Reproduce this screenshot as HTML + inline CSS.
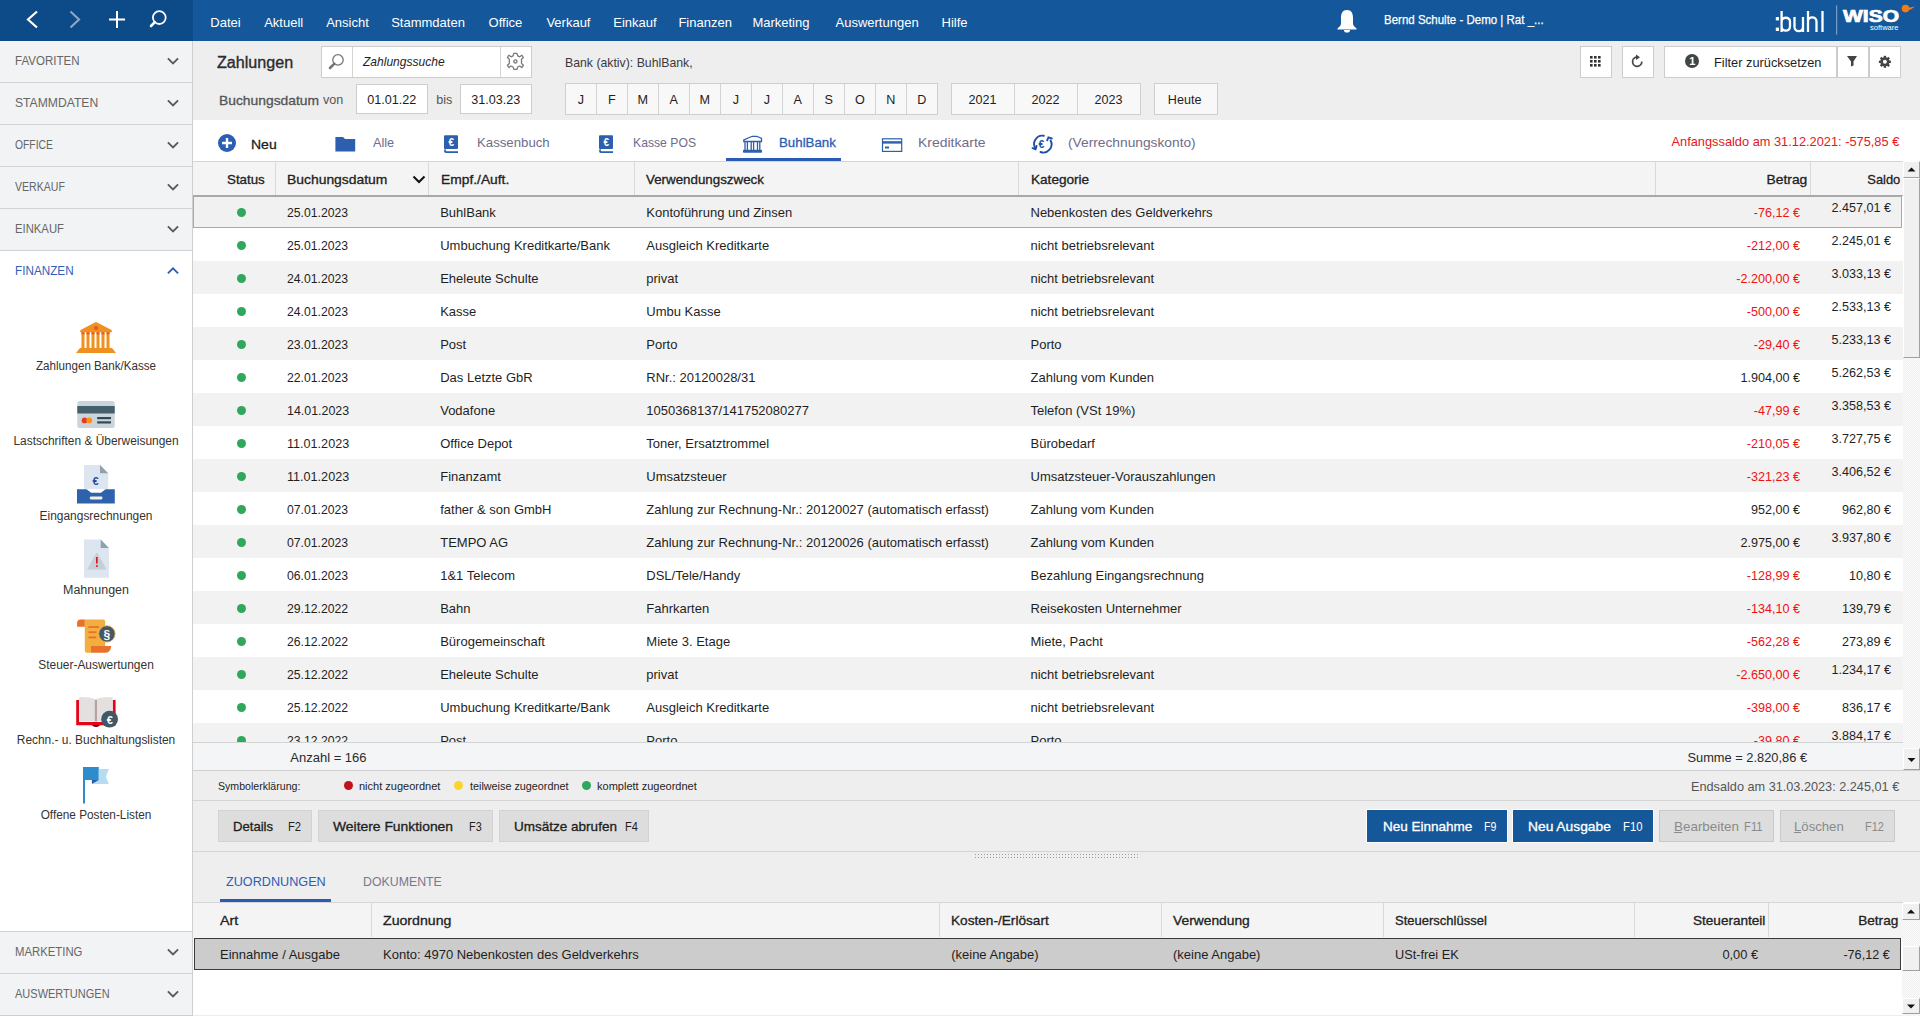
<!DOCTYPE html>
<html><head><meta charset="utf-8"><title>Zahlungen</title>
<style>
html,body{margin:0;padding:0;width:1920px;height:1016px;overflow:hidden;background:#fff;}
body{position:relative;font-family:"Liberation Sans",sans-serif;}
.r{position:absolute;}
.t{position:absolute;white-space:nowrap;line-height:1;}
</style></head><body>
<div class="r" style="left:0px;top:0px;width:193px;height:41px;background:#0d4a88;"></div>
<div class="r" style="left:193px;top:0px;width:1727px;height:41px;background:#14579b;"></div>
<div class="r" style="left:0px;top:41px;width:192px;height:975px;background:#f2f3f5;"></div>
<div class="r" style="left:192px;top:41px;width:1px;height:975px;background:#cfcfcf;"></div>
<div class="r" style="left:0px;top:251px;width:192px;height:681px;background:#ffffff;"></div>
<div class="r" style="left:0px;top:82px;width:192px;height:1px;background:#d2d2d2;"></div>
<div class="r" style="left:0px;top:124px;width:192px;height:1px;background:#d2d2d2;"></div>
<div class="r" style="left:0px;top:166px;width:192px;height:1px;background:#d2d2d2;"></div>
<div class="r" style="left:0px;top:208px;width:192px;height:1px;background:#d2d2d2;"></div>
<div class="r" style="left:0px;top:250px;width:192px;height:1px;background:#d2d2d2;"></div>
<div class="r" style="left:0px;top:931px;width:192px;height:1px;background:#d2d2d2;"></div>
<div class="r" style="left:0px;top:973px;width:192px;height:1px;background:#d2d2d2;"></div>
<div class="r" style="left:193px;top:41px;width:1727px;height:79px;background:#eeeeee;"></div>
<div class="r" style="left:193px;top:120px;width:1727px;height:41px;background:#ffffff;"></div>
<div class="r" style="left:193px;top:161px;width:1710px;height:1px;background:#d4d4d4;"></div>
<svg class="r" style="left:0;top:0" width="193" height="41" viewBox="0 0 193 41">
<polyline points="37,11.5 28,19.5 37,27.5" fill="none" stroke="#fff" stroke-width="2.2"/>
<polyline points="70.5,11.5 79,19.5 70.5,27.5" fill="none" stroke="#8ca6c6" stroke-width="2.2"/>
<path d="M117,11 V28 M109,19.5 H125" stroke="#fff" stroke-width="2"/>
<circle cx="159.3" cy="17.6" r="6.4" fill="none" stroke="#fff" stroke-width="1.8"/>
<path d="M154.8,22.2 L151,26" stroke="#fff" stroke-width="2.6" stroke-linecap="round"/>
</svg>
<div class="t" style="top:16.00px;font-size:13px;color:#ffffff;left:210.3px;">Datei</div>
<div class="t" style="top:16.00px;font-size:13px;color:#ffffff;left:264.2px;">Aktuell</div>
<div class="t" style="top:16.00px;font-size:13px;color:#ffffff;left:326.2px;">Ansicht</div>
<div class="t" style="top:16.00px;font-size:13px;color:#ffffff;left:391.2px;">Stammdaten</div>
<div class="t" style="top:16.00px;font-size:13px;color:#ffffff;left:488.6px;">Office</div>
<div class="t" style="top:16.00px;font-size:13px;color:#ffffff;left:546.4px;">Verkauf</div>
<div class="t" style="top:16.00px;font-size:13px;color:#ffffff;left:613.3px;">Einkauf</div>
<div class="t" style="top:16.00px;font-size:13px;color:#ffffff;left:678.4px;">Finanzen</div>
<div class="t" style="top:16.00px;font-size:13px;color:#ffffff;left:752.4px;">Marketing</div>
<div class="t" style="top:16.00px;font-size:13px;color:#ffffff;left:835.5px;">Auswertungen</div>
<div class="t" style="top:16.00px;font-size:13px;color:#ffffff;left:941.5px;">Hilfe</div>
<svg class="r" style="left:1335px;top:8px" width="24" height="26" viewBox="0 0 24 26">
<path d="M12,2 C7.5,2 6,5.5 6,10 L6,15.5 C6,17.5 4.2,19 2.5,20.5 L2.5,21.5 L21.5,21.5 L21.5,20.5 C19.8,19 18,17.5 18,15.5 L18,10 C18,5.5 16.5,2 12,2 Z" fill="#fff"/>
<path d="M9,22 A3,2.6 0 0 0 15,22 Z" fill="#fff"/>
</svg>
<div class="t" style="top:14.42px;font-size:12.5px;-webkit-text-stroke:0.25px #ffffff;transform:scaleX(0.9203);transform-origin:left 50%;color:#ffffff;left:1383.7px;">Bernd Schulte - Demo | Rat _...</div>
<svg class="r" style="left:1770px;top:0" width="150" height="41" viewBox="0 0 150 41">
<rect x="5.8" y="17" width="3.2" height="3.4" fill="#fff"/><rect x="5.8" y="27.6" width="3.2" height="3.4" fill="#fff"/>
<path d="M11.6,11 V32 M11.6,21.5 C11.6,16.5 20,16.5 20,21.5 V26.5 C20,32 11.6,32 11.6,26.5" fill="none" stroke="#fff" stroke-width="2.3"/>
<path d="M24.5,17 V27 C24.5,32.5 33,32.5 33,27 V17 M33,17 V32" fill="none" stroke="#fff" stroke-width="2.3"/>
<path d="M38,11 V32 M38,21.5 C38,16 46.5,16 46.5,21.5 V32" fill="none" stroke="#fff" stroke-width="2.3"/>
<path d="M52.5,11 V32" fill="none" stroke="#fff" stroke-width="2.3"/>
<rect x="66.2" y="5.4" width="1" height="29.2" fill="#8eabd0"/>
<text x="73" y="22.2" font-family="Liberation Sans" font-weight="700" font-size="15.6" fill="#fff" stroke="#fff" stroke-width="0.7" textLength="56" lengthAdjust="spacingAndGlyphs">WISO</text>
<text x="100" y="30" font-family="Liberation Sans" font-size="8" fill="#fff" textLength="28.5" lengthAdjust="spacingAndGlyphs">software</text>
<circle cx="135.5" cy="8.6" r="3.8" fill="#f07d1a"/><path d="M137,8 L145,6.5 L140,10" fill="#f07d1a"/>
</svg>
<div class="t" style="top:54.89px;font-size:12.3px;transform:scaleX(0.9388);transform-origin:left 50%;color:#666666;left:15.4px;">FAVORITEN</div>
<svg class="r" style="left:166px;top:56px" width="14" height="10" viewBox="0 0 14 10"><polyline points="1.9,2.4 7,7.4 12.1,2.4" fill="none" stroke="#5a5a5a" stroke-width="1.9"/></svg>
<div class="t" style="top:96.89px;font-size:12.3px;transform:scaleX(0.9880);transform-origin:left 50%;color:#666666;left:15.4px;">STAMMDATEN</div>
<svg class="r" style="left:166px;top:98px" width="14" height="10" viewBox="0 0 14 10"><polyline points="1.9,2.4 7,7.4 12.1,2.4" fill="none" stroke="#5a5a5a" stroke-width="1.9"/></svg>
<div class="t" style="top:138.89px;font-size:12.3px;transform:scaleX(0.8389);transform-origin:left 50%;color:#666666;left:15.4px;">OFFICE</div>
<svg class="r" style="left:166px;top:140px" width="14" height="10" viewBox="0 0 14 10"><polyline points="1.9,2.4 7,7.4 12.1,2.4" fill="none" stroke="#5a5a5a" stroke-width="1.9"/></svg>
<div class="t" style="top:180.89px;font-size:12.3px;transform:scaleX(0.8578);transform-origin:left 50%;color:#666666;left:15.4px;">VERKAUF</div>
<svg class="r" style="left:166px;top:182px" width="14" height="10" viewBox="0 0 14 10"><polyline points="1.9,2.4 7,7.4 12.1,2.4" fill="none" stroke="#5a5a5a" stroke-width="1.9"/></svg>
<div class="t" style="top:222.89px;font-size:12.3px;transform:scaleX(0.9183);transform-origin:left 50%;color:#666666;left:15.4px;">EINKAUF</div>
<svg class="r" style="left:166px;top:224px" width="14" height="10" viewBox="0 0 14 10"><polyline points="1.9,2.4 7,7.4 12.1,2.4" fill="none" stroke="#5a5a5a" stroke-width="1.9"/></svg>
<div class="t" style="top:264.89px;font-size:12.3px;transform:scaleX(0.9533);transform-origin:left 50%;color:#2f5fb9;left:15.4px;">FINANZEN</div>
<svg class="r" style="left:166px;top:265.5px" width="14" height="10" viewBox="0 0 14 10"><polyline points="1.9,7.4 7,2.4 12.1,7.4" fill="none" stroke="#2f5fb9" stroke-width="1.9"/></svg>
<div class="t" style="top:945.89px;font-size:12.3px;transform:scaleX(0.9222);transform-origin:left 50%;color:#666666;left:15.4px;">MARKETING</div>
<svg class="r" style="left:166px;top:947px" width="14" height="10" viewBox="0 0 14 10"><polyline points="1.9,2.4 7,7.4 12.1,2.4" fill="none" stroke="#5a5a5a" stroke-width="1.9"/></svg>
<div class="t" style="top:987.89px;font-size:12.3px;transform:scaleX(0.8952);transform-origin:left 50%;color:#666666;left:15.4px;">AUSWERTUNGEN</div>
<svg class="r" style="left:166px;top:989px" width="14" height="10" viewBox="0 0 14 10"><polyline points="1.9,2.4 7,7.4 12.1,2.4" fill="none" stroke="#5a5a5a" stroke-width="1.9"/></svg>
<div class="t" style="top:359.74px;font-size:12px;transform:scaleX(0.9677);transform-origin:center 50%;color:#333333;left:-203.7px;width:600px;text-align:center;">Zahlungen Bank/Kasse</div>
<div class="t" style="top:434.84px;font-size:12px;transform:scaleX(0.9945);transform-origin:center 50%;color:#333333;left:-203.7px;width:600px;text-align:center;">Lastschriften &amp; Überweisungen</div>
<div class="t" style="top:509.84px;font-size:12px;transform:scaleX(0.9955);transform-origin:center 50%;color:#333333;left:-203.7px;width:600px;text-align:center;">Eingangsrechnungen</div>
<div class="t" style="top:584.34px;font-size:12px;transform:scaleX(1.0403);transform-origin:center 50%;color:#333333;left:-203.7px;width:600px;text-align:center;">Mahnungen</div>
<div class="t" style="top:659.44px;font-size:12px;transform:scaleX(0.9957);transform-origin:center 50%;color:#333333;left:-203.7px;width:600px;text-align:center;">Steuer-Auswertungen</div>
<div class="t" style="top:734.34px;font-size:12px;transform:scaleX(0.9937);transform-origin:center 50%;color:#333333;left:-203.7px;width:600px;text-align:center;">Rechn.- u. Buchhaltungslisten</div>
<div class="t" style="top:809.34px;font-size:12px;transform:scaleX(0.9830);transform-origin:center 50%;color:#333333;left:-203.7px;width:600px;text-align:center;">Offene Posten-Listen</div>
<svg class="r" style="left:0;top:300px" width="192" height="520" viewBox="0 300 192 520">
<!-- bank -->
<path d="M96,322 L80.5,330 Q79.5,331.5 80.5,332.3 L111.5,332.3 Q112.5,331.5 111.5,330 Z" fill="#f0901f"/>
<circle cx="96" cy="328" r="2" fill="#e4582a"/>
<g fill="#f0901f"><rect x="81.5" y="332" width="3" height="16"/><rect x="86.5" y="332" width="3" height="16"/><rect x="91.5" y="332" width="3" height="16"/><rect x="96.5" y="332" width="3" height="16"/><rect x="101.5" y="332" width="3" height="16"/><rect x="106.5" y="332" width="3" height="16"/></g>
<g fill="#e4582a"><rect x="81.5" y="332.3" width="3" height="2"/><rect x="86.5" y="332.3" width="3" height="2"/><rect x="91.5" y="332.3" width="3" height="2"/><rect x="96.5" y="332.3" width="3" height="2"/><rect x="101.5" y="332.3" width="3" height="2"/><rect x="106.5" y="332.3" width="3" height="2"/></g>
<path d="M80,348 L112,348 L116,353 L76,353 Z" fill="#f0901f"/>
<!-- card -->
<rect x="77.3" y="401" width="37.4" height="27" rx="2.5" fill="#cbd4da"/>
<rect x="77.3" y="406" width="37.4" height="7.5" fill="#44606c"/>
<circle cx="84.6" cy="420.4" r="2.9" fill="#e63c1e"/><circle cx="89.3" cy="420.4" r="2.9" fill="#f7941d"/>
<rect x="97.2" y="417" width="13.8" height="2.2" fill="#2e4a56"/><rect x="97.2" y="421.3" width="13.8" height="2.2" fill="#2e4a56"/>
<!-- inbox -->
<path d="M84,465 L100,465 L108.2,473.3 L108.2,489 L84,489 Z" fill="#dde5f0"/>
<path d="M100,465 L108.2,473.3 L100,473.3 Z" fill="#8fa2ac"/>
<text x="95.5" y="485" font-family="Liberation Sans" font-size="11" font-weight="700" fill="#1f4f9e" text-anchor="middle">€</text>
<path d="M77,489.3 L86.5,489.3 L91.2,492.8 L101,492.8 L105.5,489.3 L114.8,489.3 L114.8,503.6 L77,503.6 Z" fill="#2f62ad"/>
<rect x="89.7" y="496.6" width="12.8" height="2.8" rx="1.4" fill="#f4f2de"/>
<!-- warning doc -->
<path d="M84,539.4 L100.7,539.4 L108.9,548 L108.9,577.8 L84,577.8 Z" fill="#dde5f0"/>
<path d="M100.7,539.4 L108.9,548 L100.7,548 Z" fill="#8fa2ac"/>
<path d="M96.8,553 L105.8,569 L87.8,569 Z" fill="#c3cfd9" stroke="#c3cfd9" stroke-width="1" stroke-linejoin="round"/>
<rect x="96" y="557" width="1.7" height="6.5" fill="#e3141e"/><rect x="96" y="565.2" width="1.7" height="1.7" fill="#e3141e"/>
<!-- scroll -->
<path d="M84.8,619.4 L103,619.4 Q105.2,619.4 105.2,621.6 L105.2,646 L91,646 L91,652.8 L87,652.8 Q84.8,652.8 84.8,650.6 Z" fill="#f2ae3e"/>
<path d="M80.5,619.4 L84.8,619.4 L84.8,626.8 L77.1,626.8 L77.1,623 Q77.1,619.4 80.5,619.4 Z" fill="#e8712b"/>
<path d="M91,645.9 L111.3,645.9 Q110.5,652.8 105,652.8 L91,652.8 Z" fill="#e8712b"/>
<rect x="88.4" y="626.2" width="10.6" height="1.8" fill="#e8712b"/><rect x="88.4" y="631.3" width="8" height="1.8" fill="#e8712b"/><rect x="88.4" y="636.5" width="8" height="1.8" fill="#e8712b"/>
<circle cx="106.9" cy="633.9" r="8.2" fill="#43596a" stroke="#f2ae3e" stroke-width="0.8"/>
<text x="106.9" y="638.6" font-family="Liberation Sans" font-size="12" font-weight="700" fill="#fff" text-anchor="middle">§</text>
<!-- book -->
<path d="M76.2,700 L79,700 L79,722 L112.7,722 L112.7,700 L115.6,700 L115.6,725.2 L100,725.2 Q96,729 92,725.2 L76.2,725.2 Z" fill="#e3051b"/>
<path d="M79.1,697.2 Q87,696.5 95.5,699 Q104,696.5 112.7,697.2 L112.7,721.5 L79.1,721.5 Z" fill="#e4e0e0"/>
<rect x="94.8" y="700" width="2.2" height="21.5" fill="#b9a29e"/>
<path d="M92,725 Q96,728 100,725" fill="#111"/>
<circle cx="109.6" cy="719.2" r="8.4" fill="#3f5966"/>
<text x="109.8" y="723.5" font-family="Liberation Sans" font-size="11" font-weight="700" fill="#fff" text-anchor="middle">€</text>
<!-- flag -->
<rect x="83" y="767" width="2" height="36.5" fill="#2e8bcc"/>
<path d="M83,767 L98.8,767 L98.8,780 L83,780 Z" fill="#2e8bcc"/>
<path d="M98.8,769 L108.9,769 L105.9,776.7 L108.9,783.9 L92,783.9 L98.8,780 Z" fill="#b5dcf3"/>
<path d="M91.9,780 L98.8,780 L91.9,784 Z" fill="#1f5fae"/>
</svg>
<div class="t" style="top:55.46px;font-size:16px;-webkit-text-stroke:0.35px #2b2b2b;transform:scaleX(1.0067);transform-origin:left 50%;color:#2b2b2b;left:217px;">Zahlungen</div>
<div class="r" style="left:321px;top:46px;width:211px;height:32px;background:#ffffff;box-sizing:border-box;border:1px solid #cdcdcd;"></div>
<div class="r" style="left:352px;top:47px;width:1px;height:30px;background:#d4d4d4;"></div>
<div class="r" style="left:500px;top:47px;width:1px;height:30px;background:#d4d4d4;"></div>
<svg class="r" style="left:321px;top:46px" width="211" height="32" viewBox="321 46 211 32">
<circle cx="338" cy="59.9" r="5.2" fill="none" stroke="#767676" stroke-width="1.3"/>
<path d="M334.2,63.8 L330,68" stroke="#767676" stroke-width="2.6" stroke-linecap="round"/>
<g transform="translate(515.4,61.4)" fill="none" stroke="#7a7a7a" stroke-width="1.3" stroke-linejoin="round">
<path d="M-1.6,-8 L1.6,-8 L2.3,-5.6 L4.4,-4.6 L6.4,-6.2 L8,-3.9 L6.1,-2.2 L6.1,2.2 L8,3.9 L6.4,6.2 L4.4,4.6 L2.3,5.6 L1.6,8 L-1.6,8 L-2.3,5.6 L-4.4,4.6 L-6.4,6.2 L-8,3.9 L-6.1,2.2 L-6.1,-2.2 L-8,-3.9 L-6.4,-6.2 L-4.4,-4.6 L-2.3,-5.6 Z"/>
<circle cx="0" cy="0" r="1.6"/>
</g>
</svg>
<div class="t" style="top:55.83px;font-size:12.6px;font-style:italic;transform:scaleX(0.9553);transform-origin:left 50%;color:#1e1e1e;left:362.8px;">Zahlungssuche</div>
<div class="t" style="top:56.83px;font-size:12.6px;transform:scaleX(0.9748);transform-origin:left 50%;color:#3a3a3a;left:565px;">Bank (aktiv): BuhlBank,</div>
<div class="r" style="left:1580px;top:46px;width:32px;height:32px;background:#ffffff;box-sizing:border-box;border:1px solid #cdcdcd;"></div>
<div class="r" style="left:1622px;top:46px;width:32px;height:32px;background:#ffffff;box-sizing:border-box;border:1px solid #cdcdcd;"></div>
<div class="r" style="left:1664px;top:46px;width:173px;height:32px;background:#ffffff;box-sizing:border-box;border:1px solid #cdcdcd;"></div>
<div class="r" style="left:1837px;top:46px;width:32px;height:32px;background:#ffffff;box-sizing:border-box;border:1px solid #cdcdcd;"></div>
<div class="r" style="left:1869px;top:46px;width:32px;height:32px;background:#ffffff;box-sizing:border-box;border:1px solid #cdcdcd;"></div>
<svg class="r" style="left:1580px;top:46px" width="330" height="32" viewBox="1580 46 330 32">
<g fill="#333">
<rect x="1590" y="56" width="2.6" height="2.6"/><rect x="1594" y="56" width="2.6" height="2.6"/><rect x="1598" y="56" width="2.6" height="2.6"/>
<rect x="1590" y="60" width="2.6" height="2.6"/><rect x="1594" y="60" width="2.6" height="2.6"/><rect x="1598" y="60" width="2.6" height="2.6"/>
<rect x="1590" y="64" width="2.6" height="2.6"/><rect x="1594" y="64" width="2.6" height="2.6"/><rect x="1598" y="64" width="2.6" height="2.6"/>
</g>
<path d="M1641.8,61.6 A4.6,4.6 0 1 1 1636.3,57.2" fill="none" stroke="#444" stroke-width="1.7"/>
<path d="M1636,54.5 L1640,57.3 L1636,60 Z" fill="#444"/>
<circle cx="1692" cy="61" r="7" fill="#444"/>
<text x="1692.3" y="65.4" font-family="Liberation Sans" font-size="11" font-weight="700" fill="#fff" text-anchor="middle">1</text>
<path d="M1847,56 L1857,56 L1853.5,61.5 L1853.5,65.5 L1851,66.6 L1851,61.5 Z" fill="#444"/>
<g transform="translate(1884.9,61.8)" fill="#444">
<circle r="4.6"/>
<rect x="-1.2" y="-6" width="2.4" height="12"/><rect x="-6" y="-1.2" width="12" height="2.4"/>
<rect x="-1.2" y="-6" width="2.4" height="12" transform="rotate(45)"/><rect x="-1.2" y="-6" width="2.4" height="12" transform="rotate(-45)"/>
</g>
<circle cx="1884.9" cy="61.8" r="2" fill="#fff"/>
</svg>
<div class="t" style="top:56.76px;font-size:12.8px;color:#1e1e1e;left:1714px;">Filter zurücksetzen</div>
<div class="t" style="top:93.50px;font-size:13px;-webkit-text-stroke:0.3px #555555;transform:scaleX(1.0656);transform-origin:left 50%;color:#555555;left:218.5px;">Buchungsdatum</div>
<div class="t" style="top:93.83px;font-size:12.6px;color:#555555;left:323px;">von</div>
<div class="r" style="left:356px;top:84px;width:72px;height:30px;background:#ffffff;box-sizing:border-box;border:1px solid #cdcdcd;"></div>
<div class="t" style="top:94.33px;font-size:12.6px;color:#1e1e1e;left:367.3px;">01.01.22</div>
<div class="t" style="top:93.83px;font-size:12.6px;color:#555555;left:436.2px;">bis</div>
<div class="r" style="left:460px;top:84px;width:72px;height:30px;background:#ffffff;box-sizing:border-box;border:1px solid #cdcdcd;"></div>
<div class="t" style="top:94.33px;font-size:12.6px;color:#1e1e1e;left:471.3px;">31.03.23</div>
<div class="r" style="left:565px;top:83px;width:373px;height:32px;background:#f8f8f8;box-sizing:border-box;border:1px solid #cfcfcf;"></div>
<div class="t" style="top:94.13px;font-size:12.6px;color:#1e1e1e;left:280.79999999999995px;width:600px;text-align:center;">J</div>
<div class="r" style="left:596px;top:84px;width:1px;height:30px;background:#d3d3d3;"></div>
<div class="t" style="top:94.13px;font-size:12.6px;color:#1e1e1e;left:311.79999999999995px;width:600px;text-align:center;">F</div>
<div class="r" style="left:627px;top:84px;width:1px;height:30px;background:#d3d3d3;"></div>
<div class="t" style="top:94.13px;font-size:12.6px;color:#1e1e1e;left:342.79999999999995px;width:600px;text-align:center;">M</div>
<div class="r" style="left:658px;top:84px;width:1px;height:30px;background:#d3d3d3;"></div>
<div class="t" style="top:94.13px;font-size:12.6px;color:#1e1e1e;left:373.79999999999995px;width:600px;text-align:center;">A</div>
<div class="r" style="left:689px;top:84px;width:1px;height:30px;background:#d3d3d3;"></div>
<div class="t" style="top:94.13px;font-size:12.6px;color:#1e1e1e;left:404.79999999999995px;width:600px;text-align:center;">M</div>
<div class="r" style="left:720px;top:84px;width:1px;height:30px;background:#d3d3d3;"></div>
<div class="t" style="top:94.13px;font-size:12.6px;color:#1e1e1e;left:435.79999999999995px;width:600px;text-align:center;">J</div>
<div class="r" style="left:751px;top:84px;width:1px;height:30px;background:#d3d3d3;"></div>
<div class="t" style="top:94.13px;font-size:12.6px;color:#1e1e1e;left:466.79999999999995px;width:600px;text-align:center;">J</div>
<div class="r" style="left:782px;top:84px;width:1px;height:30px;background:#d3d3d3;"></div>
<div class="t" style="top:94.13px;font-size:12.6px;color:#1e1e1e;left:497.79999999999995px;width:600px;text-align:center;">A</div>
<div class="r" style="left:813px;top:84px;width:1px;height:30px;background:#d3d3d3;"></div>
<div class="t" style="top:94.13px;font-size:12.6px;color:#1e1e1e;left:528.8px;width:600px;text-align:center;">S</div>
<div class="r" style="left:844px;top:84px;width:1px;height:30px;background:#d3d3d3;"></div>
<div class="t" style="top:94.13px;font-size:12.6px;color:#1e1e1e;left:559.8px;width:600px;text-align:center;">O</div>
<div class="r" style="left:875px;top:84px;width:1px;height:30px;background:#d3d3d3;"></div>
<div class="t" style="top:94.13px;font-size:12.6px;color:#1e1e1e;left:590.8px;width:600px;text-align:center;">N</div>
<div class="r" style="left:906px;top:84px;width:1px;height:30px;background:#d3d3d3;"></div>
<div class="t" style="top:94.13px;font-size:12.6px;color:#1e1e1e;left:621.8px;width:600px;text-align:center;">D</div>
<div class="r" style="left:951px;top:83px;width:190px;height:32px;background:#f8f8f8;box-sizing:border-box;border:1px solid #cfcfcf;"></div>
<div class="t" style="top:94.13px;font-size:12.6px;color:#1e1e1e;left:682.5px;width:600px;text-align:center;">2021</div>
<div class="r" style="left:1014px;top:84px;width:1px;height:30px;background:#d3d3d3;"></div>
<div class="t" style="top:94.13px;font-size:12.6px;color:#1e1e1e;left:745.5px;width:600px;text-align:center;">2022</div>
<div class="r" style="left:1077px;top:84px;width:1px;height:30px;background:#d3d3d3;"></div>
<div class="t" style="top:94.13px;font-size:12.6px;color:#1e1e1e;left:808.5px;width:600px;text-align:center;">2023</div>
<div class="r" style="left:1154px;top:83px;width:64px;height:32px;background:#f8f8f8;box-sizing:border-box;border:1px solid #cfcfcf;"></div>
<div class="t" style="top:94.13px;font-size:12.6px;color:#1e1e1e;left:884.5999999999999px;width:600px;text-align:center;">Heute</div>
<svg class="r" style="left:200px;top:125px" width="880" height="36" viewBox="200 125 880 36">
<circle cx="227" cy="143" r="9" fill="#2b5fb4"/>
<path d="M227,138 V148 M222,143 H232" stroke="#fff" stroke-width="2.4"/>
<path d="M335.4,137 L343,137 L345,139 L355.2,139 L355.2,151.4 L335.4,151.4 Z" fill="#2d5fae"/>
<g id="kb">
<rect x="444" y="135.2" width="14" height="13.8" rx="1" fill="#2c5fae"/>
<path d="M445.5,148.5 Q444,149.5 444,151 Q444,152.9 446,152.9 L458,152.9 L458,151.3 L446.5,151.3 Q445.8,151 445.8,150.5" fill="#2c5fae"/>
<text x="451.3" y="146" font-family="Liberation Sans" font-size="10" font-weight="700" fill="#fff" text-anchor="middle">€</text>
</g>
<use href="#kb" x="155"/>
<g fill="none" stroke="#2c5fae" stroke-width="1.3">
<path d="M743.8,141.5 L743.8,140 L750.5,137 L752.5,136.3 L756.5,136.3 L758.5,137 L761.5,138.5 L761.5,141.5 Z"/>
<path d="M745,142 V150 M747.4,142 V150 M751.2,142 V150 M753.6,142 V150 M757.5,142 V150 M759.8,142 V150"/>
</g>
<rect x="743" y="149.8" width="19" height="3" rx="0.8" fill="#2c5fae"/>
<rect x="882.5" y="138.8" width="19.2" height="12.6" fill="none" stroke="#2c5fae" stroke-width="1.2"/>
<rect x="882.5" y="141.2" width="19.2" height="2.4" fill="#2c5fae"/>
<rect x="885" y="146.5" width="4" height="2" fill="#2c5fae"/>
<g fill="none" stroke="#1d4fa6" stroke-width="1.9" stroke-linecap="round">
<path d="M1043.8,135.8 A8.2,8.2 0 0 0 1035.6,148.5"/>
<path d="M1040.5,152 A8.2,8.2 0 0 0 1050.6,140.5"/>
<path d="M1032.5,148.2 L1035.5,149.3 L1036.6,146"/>
<path d="M1047.2,140.3 L1048.4,137.4 L1051.8,138.5"/>
</g>
<text x="1041.3" y="147.6" font-family="Liberation Sans" font-size="10.5" font-weight="700" fill="#1d4fa6" text-anchor="middle">€</text>
</svg>
<div class="t" style="top:137.60px;font-size:13px;-webkit-text-stroke:0.3px #1e1e1e;transform:scaleX(1.0773);transform-origin:left 50%;color:#1e1e1e;left:250.5px;">Neu</div>
<div class="t" style="top:136.00px;font-size:13px;transform:scaleX(0.9773);transform-origin:left 50%;color:#6f6d8a;left:372.5px;">Alle</div>
<div class="t" style="top:136.00px;font-size:13px;transform:scaleX(1.0157);transform-origin:left 50%;color:#6f6d8a;left:477.3px;">Kassenbuch</div>
<div class="t" style="top:136.00px;font-size:13px;transform:scaleX(0.9379);transform-origin:left 50%;color:#6f6d8a;left:632.6px;">Kasse POS</div>
<div class="t" style="top:136.00px;font-size:13px;-webkit-text-stroke:0.3px #2d5db5;transform:scaleX(1.0218);transform-origin:left 50%;color:#2d5db5;left:778.6px;">BuhlBank</div>
<div class="r" style="left:726px;top:158px;width:115px;height:3px;background:#2b5cb5;"></div>
<div class="t" style="top:136.00px;font-size:13px;transform:scaleX(1.0742);transform-origin:left 50%;color:#6f6d8a;left:918.4px;">Kreditkarte</div>
<div class="t" style="top:136.00px;font-size:13px;transform:scaleX(1.0580);transform-origin:left 50%;color:#6f6d8a;left:1068.4px;">(Verrechnungskonto)</div>
<div class="t" style="top:135.00px;font-size:13px;transform:scaleX(0.9848);transform-origin:right 50%;color:#e8141b;right:20.5px;">Anfangssaldo am 31.12.2021: -575,85 €</div>
<div class="r" style="left:193px;top:162px;width:1710px;height:34px;background:#f4f4f4;"></div>
<div class="r" style="left:193px;top:195px;width:1710px;height:1.5px;background:#a8a8a8;"></div>
<div class="r" style="left:275px;top:162px;width:1px;height:33px;background:#d9d9d9;"></div>
<div class="r" style="left:428px;top:162px;width:1px;height:33px;background:#d9d9d9;"></div>
<div class="r" style="left:634px;top:162px;width:1px;height:33px;background:#d9d9d9;"></div>
<div class="r" style="left:1018px;top:162px;width:1px;height:33px;background:#d9d9d9;"></div>
<div class="r" style="left:1655px;top:162px;width:1px;height:33px;background:#d9d9d9;"></div>
<div class="r" style="left:1810px;top:162px;width:1px;height:33px;background:#d9d9d9;"></div>
<div class="t" style="top:173.20px;font-size:13px;-webkit-text-stroke:0.3px #222;transform:scaleX(1.0243);transform-origin:left 50%;color:#222;left:227.2px;">Status</div>
<div class="t" style="top:173.20px;font-size:13px;-webkit-text-stroke:0.3px #222;transform:scaleX(1.0688);transform-origin:left 50%;color:#222;left:287.3px;">Buchungsdatum</div>
<svg class="r" style="left:411.5px;top:174.5px" width="14" height="10" viewBox="0 0 14 10"><polyline points="1.5,1.5 7,7 12.5,1.5" fill="none" stroke="#111" stroke-width="2"/></svg>
<div class="t" style="top:173.20px;font-size:13px;-webkit-text-stroke:0.3px #222;transform:scaleX(1.0619);transform-origin:left 50%;color:#222;left:440.7px;">Empf./Auft.</div>
<div class="t" style="top:173.20px;font-size:13px;-webkit-text-stroke:0.3px #222;transform:scaleX(1.0261);transform-origin:left 50%;color:#222;left:646.25px;">Verwendungszweck</div>
<div class="t" style="top:173.20px;font-size:13px;-webkit-text-stroke:0.3px #222;transform:scaleX(1.0455);transform-origin:left 50%;color:#222;left:1030.5px;">Kategorie</div>
<div class="t" style="top:173.20px;font-size:13px;-webkit-text-stroke:0.3px #222;transform:scaleX(1.0649);transform-origin:right 50%;color:#222;right:112.29999999999995px;">Betrag</div>
<div class="t" style="top:173.20px;font-size:13px;-webkit-text-stroke:0.3px #222;transform:scaleX(0.9909);transform-origin:right 50%;color:#222;right:20.09999999999991px;">Saldo</div>
<div class="r" style="left:193px;top:196px;width:1710px;height:546px;overflow:hidden;background:#fff">
<div class="r" style="left:0px;top:0px;width:1709px;height:32px;background:transparent;box-sizing:border-box;border:1.5px solid #a9a9a9;background:#f1f1f1;"></div>
<div class="r" style="left:43.60000000000001px;top:11.600000000000012px;width:9.4px;height:9.4px;border-radius:50%;background:#2fa85c"></div>
<div class="t" style="top:10.00px;font-size:13px;transform:scaleX(0.9400);transform-origin:left 50%;color:#1f1f1f;left:94.19999999999999px;">25.01.2023</div>
<div class="t" style="top:10.00px;font-size:13px;color:#1f1f1f;left:247.2px;">BuhlBank</div>
<div class="t" style="top:10.00px;font-size:13px;color:#1f1f1f;left:453.29999999999995px;">Kontoführung und Zinsen</div>
<div class="t" style="top:10.00px;font-size:13px;color:#1f1f1f;left:837.5px;">Nebenkosten des Geldverkehrs</div>
<div class="t" style="top:11.33px;font-size:12.6px;color:#ee1111;right:103px;">-76,12 €</div>
<div class="t" style="top:6.33px;font-size:12.6px;color:#1f1f1f;right:12px;">2.457,01 €</div>
<div class="r" style="left:43.60000000000001px;top:44.60000000000001px;width:9.4px;height:9.4px;border-radius:50%;background:#2fa85c"></div>
<div class="t" style="top:43.00px;font-size:13px;transform:scaleX(0.9400);transform-origin:left 50%;color:#1f1f1f;left:94.19999999999999px;">25.01.2023</div>
<div class="t" style="top:43.00px;font-size:13px;color:#1f1f1f;left:247.2px;">Umbuchung Kreditkarte/Bank</div>
<div class="t" style="top:43.00px;font-size:13px;color:#1f1f1f;left:453.29999999999995px;">Ausgleich Kreditkarte</div>
<div class="t" style="top:43.00px;font-size:13px;color:#1f1f1f;left:837.5px;">nicht betriebsrelevant</div>
<div class="t" style="top:44.33px;font-size:12.6px;color:#ee1111;right:103px;">-212,00 €</div>
<div class="t" style="top:39.33px;font-size:12.6px;color:#1f1f1f;right:12px;">2.245,01 €</div>
<div class="r" style="left:0px;top:65px;width:1710px;height:33px;background:#f2f2f2;"></div>
<div class="r" style="left:43.60000000000001px;top:77.60000000000001px;width:9.4px;height:9.4px;border-radius:50%;background:#2fa85c"></div>
<div class="t" style="top:76.00px;font-size:13px;transform:scaleX(0.9400);transform-origin:left 50%;color:#1f1f1f;left:94.19999999999999px;">24.01.2023</div>
<div class="t" style="top:76.00px;font-size:13px;color:#1f1f1f;left:247.2px;">Eheleute Schulte</div>
<div class="t" style="top:76.00px;font-size:13px;color:#1f1f1f;left:453.29999999999995px;">privat</div>
<div class="t" style="top:76.00px;font-size:13px;color:#1f1f1f;left:837.5px;">nicht betriebsrelevant</div>
<div class="t" style="top:77.33px;font-size:12.6px;color:#ee1111;right:103px;">-2.200,00 €</div>
<div class="t" style="top:72.33px;font-size:12.6px;color:#1f1f1f;right:12px;">3.033,13 €</div>
<div class="r" style="left:43.60000000000001px;top:110.60000000000001px;width:9.4px;height:9.4px;border-radius:50%;background:#2fa85c"></div>
<div class="t" style="top:109.00px;font-size:13px;transform:scaleX(0.9400);transform-origin:left 50%;color:#1f1f1f;left:94.19999999999999px;">24.01.2023</div>
<div class="t" style="top:109.00px;font-size:13px;color:#1f1f1f;left:247.2px;">Kasse</div>
<div class="t" style="top:109.00px;font-size:13px;color:#1f1f1f;left:453.29999999999995px;">Umbu Kasse</div>
<div class="t" style="top:109.00px;font-size:13px;color:#1f1f1f;left:837.5px;">nicht betriebsrelevant</div>
<div class="t" style="top:110.33px;font-size:12.6px;color:#ee1111;right:103px;">-500,00 €</div>
<div class="t" style="top:105.33px;font-size:12.6px;color:#1f1f1f;right:12px;">2.533,13 €</div>
<div class="r" style="left:0px;top:131px;width:1710px;height:33px;background:#f2f2f2;"></div>
<div class="r" style="left:43.60000000000001px;top:143.60000000000002px;width:9.4px;height:9.4px;border-radius:50%;background:#2fa85c"></div>
<div class="t" style="top:142.00px;font-size:13px;transform:scaleX(0.9400);transform-origin:left 50%;color:#1f1f1f;left:94.19999999999999px;">23.01.2023</div>
<div class="t" style="top:142.00px;font-size:13px;color:#1f1f1f;left:247.2px;">Post</div>
<div class="t" style="top:142.00px;font-size:13px;color:#1f1f1f;left:453.29999999999995px;">Porto</div>
<div class="t" style="top:142.00px;font-size:13px;color:#1f1f1f;left:837.5px;">Porto</div>
<div class="t" style="top:143.33px;font-size:12.6px;color:#ee1111;right:103px;">-29,40 €</div>
<div class="t" style="top:138.33px;font-size:12.6px;color:#1f1f1f;right:12px;">5.233,13 €</div>
<div class="r" style="left:43.60000000000001px;top:176.60000000000002px;width:9.4px;height:9.4px;border-radius:50%;background:#2fa85c"></div>
<div class="t" style="top:175.00px;font-size:13px;transform:scaleX(0.9400);transform-origin:left 50%;color:#1f1f1f;left:94.19999999999999px;">22.01.2023</div>
<div class="t" style="top:175.00px;font-size:13px;color:#1f1f1f;left:247.2px;">Das Letzte GbR</div>
<div class="t" style="top:175.00px;font-size:13px;color:#1f1f1f;left:453.29999999999995px;">RNr.: 20120028/31</div>
<div class="t" style="top:175.00px;font-size:13px;color:#1f1f1f;left:837.5px;">Zahlung vom Kunden</div>
<div class="t" style="top:176.33px;font-size:12.6px;color:#1f1f1f;right:103px;">1.904,00 €</div>
<div class="t" style="top:171.33px;font-size:12.6px;color:#1f1f1f;right:12px;">5.262,53 €</div>
<div class="r" style="left:0px;top:197px;width:1710px;height:33px;background:#f2f2f2;"></div>
<div class="r" style="left:43.60000000000001px;top:209.60000000000002px;width:9.4px;height:9.4px;border-radius:50%;background:#2fa85c"></div>
<div class="t" style="top:208.00px;font-size:13px;transform:scaleX(0.9547);transform-origin:left 50%;color:#1f1f1f;left:94.19999999999999px;">14.01.2023</div>
<div class="t" style="top:208.00px;font-size:13px;color:#1f1f1f;left:247.2px;">Vodafone</div>
<div class="t" style="top:208.00px;font-size:13px;color:#1f1f1f;left:453.29999999999995px;">1050368137/141752080277</div>
<div class="t" style="top:208.00px;font-size:13px;color:#1f1f1f;left:837.5px;">Telefon (VSt 19%)</div>
<div class="t" style="top:209.33px;font-size:12.6px;color:#ee1111;right:103px;">-47,99 €</div>
<div class="t" style="top:204.33px;font-size:12.6px;color:#1f1f1f;right:12px;">3.358,53 €</div>
<div class="r" style="left:43.60000000000001px;top:242.60000000000002px;width:9.4px;height:9.4px;border-radius:50%;background:#2fa85c"></div>
<div class="t" style="top:241.00px;font-size:13px;transform:scaleX(0.9698);transform-origin:left 50%;color:#1f1f1f;left:94.19999999999999px;">11.01.2023</div>
<div class="t" style="top:241.00px;font-size:13px;color:#1f1f1f;left:247.2px;">Office Depot</div>
<div class="t" style="top:241.00px;font-size:13px;color:#1f1f1f;left:453.29999999999995px;">Toner, Ersatztrommel</div>
<div class="t" style="top:241.00px;font-size:13px;color:#1f1f1f;left:837.5px;">Bürobedarf</div>
<div class="t" style="top:242.33px;font-size:12.6px;color:#ee1111;right:103px;">-210,05 €</div>
<div class="t" style="top:237.33px;font-size:12.6px;color:#1f1f1f;right:12px;">3.727,75 €</div>
<div class="r" style="left:0px;top:263px;width:1710px;height:33px;background:#f2f2f2;"></div>
<div class="r" style="left:43.60000000000001px;top:275.6px;width:9.4px;height:9.4px;border-radius:50%;background:#2fa85c"></div>
<div class="t" style="top:274.00px;font-size:13px;transform:scaleX(0.9698);transform-origin:left 50%;color:#1f1f1f;left:94.19999999999999px;">11.01.2023</div>
<div class="t" style="top:274.00px;font-size:13px;color:#1f1f1f;left:247.2px;">Finanzamt</div>
<div class="t" style="top:274.00px;font-size:13px;color:#1f1f1f;left:453.29999999999995px;">Umsatzsteuer</div>
<div class="t" style="top:274.00px;font-size:13px;color:#1f1f1f;left:837.5px;">Umsatzsteuer-Vorauszahlungen</div>
<div class="t" style="top:275.33px;font-size:12.6px;color:#ee1111;right:103px;">-321,23 €</div>
<div class="t" style="top:270.33px;font-size:12.6px;color:#1f1f1f;right:12px;">3.406,52 €</div>
<div class="r" style="left:43.60000000000001px;top:308.6px;width:9.4px;height:9.4px;border-radius:50%;background:#2fa85c"></div>
<div class="t" style="top:307.00px;font-size:13px;transform:scaleX(0.9400);transform-origin:left 50%;color:#1f1f1f;left:94.19999999999999px;">07.01.2023</div>
<div class="t" style="top:307.00px;font-size:13px;color:#1f1f1f;left:247.2px;">father &amp; son GmbH</div>
<div class="t" style="top:307.00px;font-size:13px;color:#1f1f1f;left:453.29999999999995px;">Zahlung zur Rechnung-Nr.: 20120027 (automatisch erfasst)</div>
<div class="t" style="top:307.00px;font-size:13px;color:#1f1f1f;left:837.5px;">Zahlung vom Kunden</div>
<div class="t" style="top:308.33px;font-size:12.6px;color:#1f1f1f;right:103px;">952,00 €</div>
<div class="t" style="top:308.33px;font-size:12.6px;color:#1f1f1f;right:12px;">962,80 €</div>
<div class="r" style="left:0px;top:329px;width:1710px;height:33px;background:#f2f2f2;"></div>
<div class="r" style="left:43.60000000000001px;top:341.59999999999997px;width:9.4px;height:9.4px;border-radius:50%;background:#2fa85c"></div>
<div class="t" style="top:340.00px;font-size:13px;transform:scaleX(0.9400);transform-origin:left 50%;color:#1f1f1f;left:94.19999999999999px;">07.01.2023</div>
<div class="t" style="top:340.00px;font-size:13px;color:#1f1f1f;left:247.2px;">TEMPO AG</div>
<div class="t" style="top:340.00px;font-size:13px;color:#1f1f1f;left:453.29999999999995px;">Zahlung zur Rechnung-Nr.: 20120026 (automatisch erfasst)</div>
<div class="t" style="top:340.00px;font-size:13px;color:#1f1f1f;left:837.5px;">Zahlung vom Kunden</div>
<div class="t" style="top:341.33px;font-size:12.6px;color:#1f1f1f;right:103px;">2.975,00 €</div>
<div class="t" style="top:336.33px;font-size:12.6px;color:#1f1f1f;right:12px;">3.937,80 €</div>
<div class="r" style="left:43.60000000000001px;top:374.59999999999997px;width:9.4px;height:9.4px;border-radius:50%;background:#2fa85c"></div>
<div class="t" style="top:373.00px;font-size:13px;transform:scaleX(0.9400);transform-origin:left 50%;color:#1f1f1f;left:94.19999999999999px;">06.01.2023</div>
<div class="t" style="top:373.00px;font-size:13px;color:#1f1f1f;left:247.2px;">1&amp;1 Telecom</div>
<div class="t" style="top:373.00px;font-size:13px;color:#1f1f1f;left:453.29999999999995px;">DSL/Tele/Handy</div>
<div class="t" style="top:373.00px;font-size:13px;color:#1f1f1f;left:837.5px;">Bezahlung Eingangsrechnung</div>
<div class="t" style="top:374.33px;font-size:12.6px;color:#ee1111;right:103px;">-128,99 €</div>
<div class="t" style="top:374.33px;font-size:12.6px;color:#1f1f1f;right:12px;">10,80 €</div>
<div class="r" style="left:0px;top:395px;width:1710px;height:33px;background:#f2f2f2;"></div>
<div class="r" style="left:43.60000000000001px;top:407.59999999999997px;width:9.4px;height:9.4px;border-radius:50%;background:#2fa85c"></div>
<div class="t" style="top:406.00px;font-size:13px;transform:scaleX(0.9400);transform-origin:left 50%;color:#1f1f1f;left:94.19999999999999px;">29.12.2022</div>
<div class="t" style="top:406.00px;font-size:13px;color:#1f1f1f;left:247.2px;">Bahn</div>
<div class="t" style="top:406.00px;font-size:13px;color:#1f1f1f;left:453.29999999999995px;">Fahrkarten</div>
<div class="t" style="top:406.00px;font-size:13px;color:#1f1f1f;left:837.5px;">Reisekosten Unternehmer</div>
<div class="t" style="top:407.33px;font-size:12.6px;color:#ee1111;right:103px;">-134,10 €</div>
<div class="t" style="top:407.33px;font-size:12.6px;color:#1f1f1f;right:12px;">139,79 €</div>
<div class="r" style="left:43.60000000000001px;top:440.59999999999997px;width:9.4px;height:9.4px;border-radius:50%;background:#2fa85c"></div>
<div class="t" style="top:439.00px;font-size:13px;transform:scaleX(0.9400);transform-origin:left 50%;color:#1f1f1f;left:94.19999999999999px;">26.12.2022</div>
<div class="t" style="top:439.00px;font-size:13px;color:#1f1f1f;left:247.2px;">Bürogemeinschaft</div>
<div class="t" style="top:439.00px;font-size:13px;color:#1f1f1f;left:453.29999999999995px;">Miete 3. Etage</div>
<div class="t" style="top:439.00px;font-size:13px;color:#1f1f1f;left:837.5px;">Miete, Pacht</div>
<div class="t" style="top:440.33px;font-size:12.6px;color:#ee1111;right:103px;">-562,28 €</div>
<div class="t" style="top:440.33px;font-size:12.6px;color:#1f1f1f;right:12px;">273,89 €</div>
<div class="r" style="left:0px;top:461px;width:1710px;height:33px;background:#f2f2f2;"></div>
<div class="r" style="left:43.60000000000001px;top:473.59999999999997px;width:9.4px;height:9.4px;border-radius:50%;background:#2fa85c"></div>
<div class="t" style="top:472.00px;font-size:13px;transform:scaleX(0.9400);transform-origin:left 50%;color:#1f1f1f;left:94.19999999999999px;">25.12.2022</div>
<div class="t" style="top:472.00px;font-size:13px;color:#1f1f1f;left:247.2px;">Eheleute Schulte</div>
<div class="t" style="top:472.00px;font-size:13px;color:#1f1f1f;left:453.29999999999995px;">privat</div>
<div class="t" style="top:472.00px;font-size:13px;color:#1f1f1f;left:837.5px;">nicht betriebsrelevant</div>
<div class="t" style="top:473.33px;font-size:12.6px;color:#ee1111;right:103px;">-2.650,00 €</div>
<div class="t" style="top:468.33px;font-size:12.6px;color:#1f1f1f;right:12px;">1.234,17 €</div>
<div class="r" style="left:43.60000000000001px;top:506.59999999999997px;width:9.4px;height:9.4px;border-radius:50%;background:#2fa85c"></div>
<div class="t" style="top:505.00px;font-size:13px;transform:scaleX(0.9400);transform-origin:left 50%;color:#1f1f1f;left:94.19999999999999px;">25.12.2022</div>
<div class="t" style="top:505.00px;font-size:13px;color:#1f1f1f;left:247.2px;">Umbuchung Kreditkarte/Bank</div>
<div class="t" style="top:505.00px;font-size:13px;color:#1f1f1f;left:453.29999999999995px;">Ausgleich Kreditkarte</div>
<div class="t" style="top:505.00px;font-size:13px;color:#1f1f1f;left:837.5px;">nicht betriebsrelevant</div>
<div class="t" style="top:506.33px;font-size:12.6px;color:#ee1111;right:103px;">-398,00 €</div>
<div class="t" style="top:506.33px;font-size:12.6px;color:#1f1f1f;right:12px;">836,17 €</div>
<div class="r" style="left:0px;top:527px;width:1710px;height:33px;background:#f2f2f2;"></div>
<div class="r" style="left:43.60000000000001px;top:539.5999999999999px;width:9.4px;height:9.4px;border-radius:50%;background:#2fa85c"></div>
<div class="t" style="top:538.00px;font-size:13px;transform:scaleX(0.9400);transform-origin:left 50%;color:#1f1f1f;left:94.19999999999999px;">23.12.2022</div>
<div class="t" style="top:538.00px;font-size:13px;color:#1f1f1f;left:247.2px;">Post</div>
<div class="t" style="top:538.00px;font-size:13px;color:#1f1f1f;left:453.29999999999995px;">Porto</div>
<div class="t" style="top:538.00px;font-size:13px;color:#1f1f1f;left:837.5px;">Porto</div>
<div class="t" style="top:539.33px;font-size:12.6px;color:#ee1111;right:103px;">-39,80 €</div>
<div class="t" style="top:534.33px;font-size:12.6px;color:#1f1f1f;right:12px;">3.884,17 €</div>
</div>
<div class="r" style="left:1903px;top:161px;width:17px;height:609px;background:#f7f7f7;background-image:repeating-conic-gradient(#f0f0f0 0 25%, #fbfbfb 0 50%);background-size:2px 2px;"></div>
<div class="r" style="left:1903px;top:161px;width:17px;height:17px;background:#f0f0f0;box-sizing:border-box;border-right:1px solid #a0a0a0;border-bottom:1px solid #a0a0a0;border-left:1px solid #fff;border-top:1px solid #fff;"></div>
<svg class="r" style="left:1903px;top:161px" width="17" height="17"><path d="M4.5,10.5 L12.5,10.5 L8.5,6.5 Z" fill="#111"/></svg>
<div class="r" style="left:1903px;top:178px;width:17px;height:180px;background:#f0f0f0;box-sizing:border-box;border-right:1px solid #a0a0a0;border-bottom:1px solid #a0a0a0;border-left:1px solid #fff;border-top:1px solid #fff;"></div>
<div class="r" style="left:1903px;top:748px;width:17px;height:22px;background:#f0f0f0;box-sizing:border-box;border-right:1px solid #a0a0a0;border-bottom:1px solid #a0a0a0;border-left:1px solid #fff;border-top:1px solid #fff;"></div>
<svg class="r" style="left:1903px;top:750px" width="17" height="17"><path d="M4.5,8 L12.5,8 L8.5,12 Z" fill="#111"/></svg>
<div class="r" style="left:193px;top:742px;width:1710px;height:28px;background:#f4f5f7;"></div>
<div class="r" style="left:193px;top:742px;width:1710px;height:1px;background:#d4d4d4;"></div>
<div class="t" style="top:750.60px;font-size:13px;color:#2a2a2a;left:290.3px;">Anzahl = 166</div>
<div class="t" style="top:751.30px;font-size:13px;transform:scaleX(0.9883);transform-origin:right 50%;color:#2a2a2a;right:113.40000000000009px;">Summe = 2.820,86 €</div>
<div class="r" style="left:193px;top:770px;width:1727px;height:1px;background:#d0d0d0;"></div>
<div class="r" style="left:193px;top:771px;width:1727px;height:29px;background:#eeeeee;"></div>
<div class="r" style="left:193px;top:800px;width:1727px;height:1px;background:#d6d6d6;"></div>
<div class="t" style="top:780.57px;font-size:11.5px;transform:scaleX(0.9202);transform-origin:left 50%;color:#1e1e1e;left:217.6px;">Symbolerklärung:</div>
<div class="r" style="left:343.8px;top:780.8px;width:9.4px;height:9.4px;border-radius:50%;background:#c3121c"></div>
<div class="t" style="top:780.57px;font-size:11.5px;transform:scaleX(0.9576);transform-origin:left 50%;color:#1e1e1e;left:359.2px;">nicht zugeordnet</div>
<div class="r" style="left:453.7px;top:780.8px;width:9.4px;height:9.4px;border-radius:50%;background:#fbd431"></div>
<div class="t" style="top:780.57px;font-size:11.5px;transform:scaleX(0.9390);transform-origin:left 50%;color:#1e1e1e;left:470.1px;">teilweise zugeordnet</div>
<div class="r" style="left:581.8px;top:780.8px;width:9.4px;height:9.4px;border-radius:50%;background:#2fa85c"></div>
<div class="t" style="top:780.57px;font-size:11.5px;transform:scaleX(0.9577);transform-origin:left 50%;color:#1e1e1e;left:597.4px;">komplett zugeordnet</div>
<div class="t" style="top:779.80px;font-size:13px;transform:scaleX(0.9764);transform-origin:right 50%;color:#555555;right:20.59999999999991px;">Endsaldo am 31.03.2023: 2.245,01 €</div>
<div class="r" style="left:193px;top:801px;width:1727px;height:50px;background:#eeeeee;"></div>
<div class="r" style="left:193px;top:851px;width:1727px;height:1px;background:#d4d4d4;"></div>
<div class="r" style="left:218px;top:810px;width:94px;height:32px;background:#dddddd;box-sizing:border-box;border:1px solid #d2d2d2;"></div>
<div class="t" style="top:820.30px;font-size:13px;-webkit-text-stroke:0.3px #1e1e1e;transform:scaleX(1.0077);transform-origin:left 50%;color:#1e1e1e;left:233.4px;">Details</div>
<div class="t" style="top:820.30px;font-size:13px;transform:scaleX(0.8643);transform-origin:left 50%;color:#1e1e1e;left:288.1px;">F2</div>
<div class="r" style="left:318px;top:810px;width:175px;height:32px;background:#dddddd;box-sizing:border-box;border:1px solid #d2d2d2;"></div>
<div class="t" style="top:820.30px;font-size:13px;-webkit-text-stroke:0.3px #1e1e1e;transform:scaleX(1.0670);transform-origin:left 50%;color:#1e1e1e;left:332.9px;">Weitere Funktionen</div>
<div class="t" style="top:820.30px;font-size:13px;transform:scaleX(0.8357);transform-origin:left 50%;color:#1e1e1e;left:469px;">F3</div>
<div class="r" style="left:499px;top:810px;width:150px;height:32px;background:#dddddd;box-sizing:border-box;border:1px solid #d2d2d2;"></div>
<div class="t" style="top:820.30px;font-size:13px;-webkit-text-stroke:0.3px #1e1e1e;transform:scaleX(1.0398);transform-origin:left 50%;color:#1e1e1e;left:514.3px;">Umsätze abrufen</div>
<div class="t" style="top:820.30px;font-size:13px;transform:scaleX(0.8500);transform-origin:left 50%;color:#1e1e1e;left:625.1px;">F4</div>
<div class="r" style="left:1366px;top:809px;width:142px;height:34px;background:#ffffff;"></div>
<div class="r" style="left:1367px;top:810px;width:140px;height:32px;background:#14589a;"></div>
<div class="t" style="top:820.30px;font-size:13px;-webkit-text-stroke:0.3px #ffffff;transform:scaleX(1.0388);transform-origin:left 50%;color:#ffffff;left:1382.8px;">Neu Einnahme</div>
<div class="t" style="top:820.30px;font-size:13px;transform:scaleX(0.8143);transform-origin:left 50%;color:#ffffff;left:1483.75px;">F9</div>
<div class="r" style="left:1512px;top:809px;width:142px;height:34px;background:#ffffff;"></div>
<div class="r" style="left:1513px;top:810px;width:140px;height:32px;background:#14589a;"></div>
<div class="t" style="top:820.30px;font-size:13px;-webkit-text-stroke:0.3px #ffffff;transform:scaleX(1.0610);transform-origin:left 50%;color:#ffffff;left:1528.2px;">Neu Ausgabe</div>
<div class="t" style="top:820.30px;font-size:13px;transform:scaleX(0.8714);transform-origin:left 50%;color:#ffffff;left:1623px;">F10</div>
<div class="r" style="left:1659px;top:810px;width:115px;height:32px;background:#dddddd;box-sizing:border-box;border:1px solid #c9c9c9;"></div>
<div class="t" style="top:820.30px;font-size:13px;transform:scaleX(1.0323);transform-origin:left 50%;color:#8a8a8a;left:1674px;">Bearbeiten</div>
<div class="t" style="top:820.30px;font-size:13px;transform:scaleX(0.8700);transform-origin:left 50%;color:#8a8a8a;left:1744.3px;">F11</div>
<div class="r" style="left:1780px;top:810px;width:115px;height:32px;background:#dddddd;box-sizing:border-box;border:1px solid #c9c9c9;"></div>
<div class="t" style="top:820.30px;font-size:13px;transform:scaleX(1.0125);transform-origin:left 50%;color:#8a8a8a;left:1794.4px;">Löschen</div>
<div class="t" style="top:820.30px;font-size:13px;transform:scaleX(0.8429);transform-origin:left 50%;color:#8a8a8a;left:1865px;">F12</div>
<div class="r" style="left:1674px;top:832px;width:8px;height:1.2px;background:#8a8a8a;"></div>
<div class="r" style="left:1794.4px;top:832px;width:7px;height:1.2px;background:#8a8a8a;"></div>
<div class="r" style="left:193px;top:852px;width:1727px;height:50px;background:#eeeeee;"></div>
<div class="r" style="left:974px;top:852.5px;width:165px;height:5px;background:transparent;background-image:radial-gradient(circle, #9a9a9a 0.6px, transparent 0.9px);background-size:3px 3px;"></div>
<div class="t" style="top:876.16px;font-size:12.8px;transform:scaleX(0.9880);transform-origin:left 50%;color:#2d5db5;left:225.9px;">ZUORDNUNGEN</div>
<div class="r" style="left:220px;top:899px;width:111px;height:3px;background:#2b5cb5;"></div>
<div class="t" style="top:876.16px;font-size:12.8px;transform:scaleX(0.9642);transform-origin:left 50%;color:#7a7890;left:362.6px;">DOKUMENTE</div>
<div class="r" style="left:193px;top:902px;width:1710px;height:1px;background:#d6d6d6;"></div>
<div class="r" style="left:193px;top:903px;width:1710px;height:35px;background:#f4f4f4;"></div>
<div class="r" style="left:371px;top:903px;width:1px;height:34px;background:#d9d9d9;"></div>
<div class="r" style="left:939px;top:903px;width:1px;height:34px;background:#d9d9d9;"></div>
<div class="r" style="left:1161px;top:903px;width:1px;height:34px;background:#d9d9d9;"></div>
<div class="r" style="left:1383px;top:903px;width:1px;height:34px;background:#d9d9d9;"></div>
<div class="r" style="left:1634px;top:903px;width:1px;height:34px;background:#d9d9d9;"></div>
<div class="r" style="left:1768px;top:903px;width:1px;height:34px;background:#d9d9d9;"></div>
<div class="t" style="top:914.30px;font-size:13px;-webkit-text-stroke:0.3px #222;transform:scaleX(1.1000);transform-origin:left 50%;color:#222;left:220px;">Art</div>
<div class="t" style="top:914.30px;font-size:13px;-webkit-text-stroke:0.3px #222;transform:scaleX(1.0873);transform-origin:left 50%;color:#222;left:383px;">Zuordnung</div>
<div class="t" style="top:914.30px;font-size:13px;-webkit-text-stroke:0.3px #222;transform:scaleX(1.0484);transform-origin:left 50%;color:#222;left:951.2px;">Kosten-/Erlösart</div>
<div class="t" style="top:914.30px;font-size:13px;-webkit-text-stroke:0.3px #222;transform:scaleX(1.0625);transform-origin:left 50%;color:#222;left:1173px;">Verwendung</div>
<div class="t" style="top:914.30px;font-size:13px;-webkit-text-stroke:0.3px #222;color:#222;left:1395px;">Steuerschlüssel</div>
<div class="t" style="top:914.30px;font-size:13px;-webkit-text-stroke:0.3px #222;transform:scaleX(1.0435);transform-origin:right 50%;color:#222;right:154.20000000000005px;">Steueranteil</div>
<div class="t" style="top:914.30px;font-size:13px;-webkit-text-stroke:0.3px #222;transform:scaleX(1.0486);transform-origin:right 50%;color:#222;right:22.09999999999991px;">Betrag</div>
<div class="r" style="left:193px;top:938px;width:1710px;height:78px;background:#ffffff;"></div>
<div class="r" style="left:194px;top:938px;width:1707px;height:32px;background:#cccccc;box-sizing:border-box;border:1.6px solid #3a3a3a;"></div>
<div class="t" style="top:948.00px;font-size:13px;color:#1e1e1e;left:220px;">Einnahme / Ausgabe</div>
<div class="t" style="top:948.00px;font-size:13px;color:#1e1e1e;left:383px;">Konto: 4970 Nebenkosten des Geldverkehrs</div>
<div class="t" style="top:948.00px;font-size:13px;color:#1e1e1e;left:951.2px;">(keine Angabe)</div>
<div class="t" style="top:948.00px;font-size:13px;color:#1e1e1e;left:1173px;">(keine Angabe)</div>
<div class="t" style="top:948.00px;font-size:13px;transform:scaleX(0.9797);transform-origin:left 50%;color:#1e1e1e;left:1395px;">USt-frei EK</div>
<div class="t" style="top:948.00px;font-size:13px;transform:scaleX(0.9889);transform-origin:right 50%;color:#1e1e1e;right:162px;">0,00 €</div>
<div class="t" style="top:948.00px;font-size:13px;transform:scaleX(0.9708);transform-origin:right 50%;color:#1e1e1e;right:30.299999999999955px;">-76,12 €</div>
<div class="r" style="left:1902px;top:903px;width:18px;height:113px;background:#f7f7f7;background-image:repeating-conic-gradient(#f0f0f0 0 25%, #fbfbfb 0 50%);background-size:2px 2px;"></div>
<div class="r" style="left:1902px;top:903px;width:18px;height:17px;background:#f0f0f0;box-sizing:border-box;border-right:1px solid #a0a0a0;border-bottom:1px solid #a0a0a0;border-left:1px solid #fff;border-top:1px solid #fff;"></div>
<svg class="r" style="left:1902px;top:903px" width="18" height="17"><path d="M5,10.5 L13,10.5 L9,6.5 Z" fill="#111"/></svg>
<div class="r" style="left:1902px;top:946px;width:18px;height:25px;background:#f0f0f0;box-sizing:border-box;border-right:1px solid #a0a0a0;border-bottom:1px solid #a0a0a0;border-left:1px solid #fff;border-top:1px solid #fff;"></div>
<div class="r" style="left:1902px;top:998px;width:18px;height:16px;background:#f0f0f0;box-sizing:border-box;border-right:1px solid #a0a0a0;border-bottom:1px solid #a0a0a0;border-left:1px solid #fff;border-top:1px solid #fff;"></div>
<svg class="r" style="left:1902px;top:998px" width="18" height="17"><path d="M5,6.5 L13,6.5 L9,10.5 Z" fill="#111"/></svg>
<div class="r" style="left:0px;top:1015px;width:192px;height:1px;background:#cfcfcf;"></div>
<div class="r" style="left:193px;top:1015px;width:1709px;height:1px;background:#ececec;"></div>
</body></html>
